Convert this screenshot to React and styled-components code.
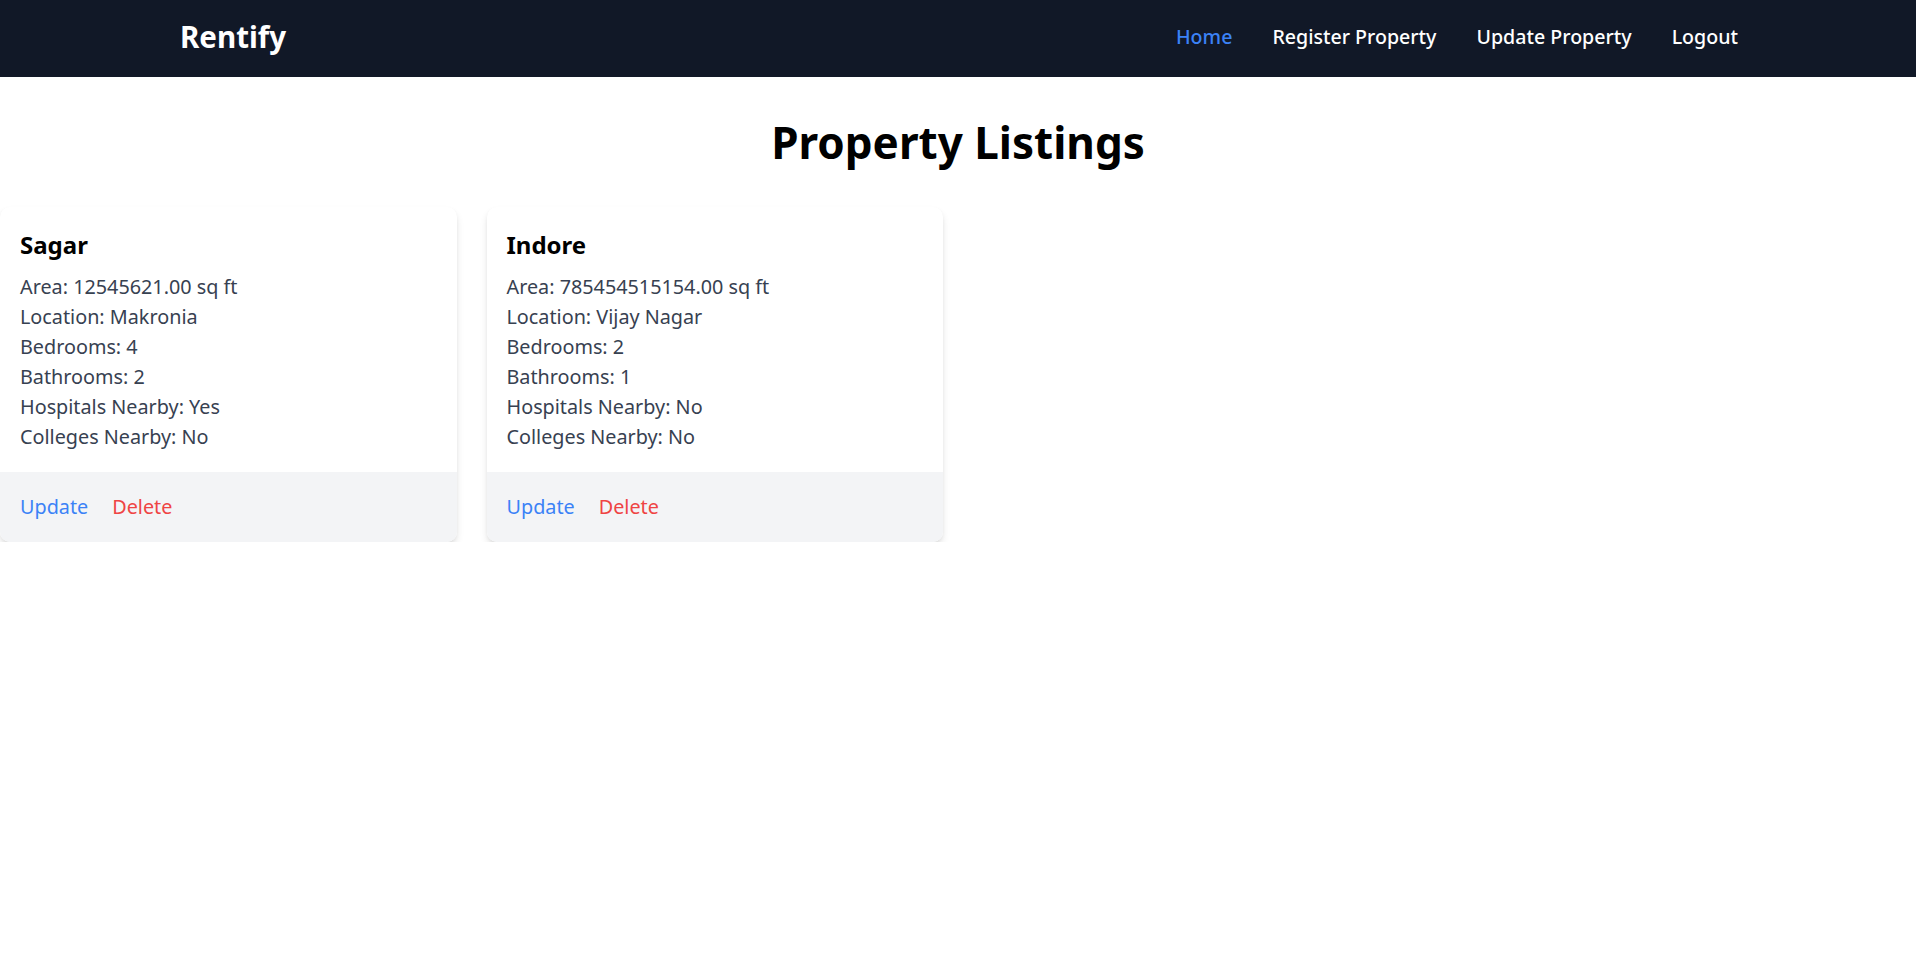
import React from 'react';
import styled, {createGlobalStyle} from 'styled-components';

const GlobalStyle = createGlobalStyle`
    * {
        box-sizing: border-box;
    }
    body {
        margin: 0;
        background: #ffffff;
        font-family: "Noto Sans", "Open Sans", sans-serif;
        color: #000000;
    }
`;

// 매물 목록 데이터
const properties = [
    {
        id: 1,
        title: 'Sagar',
        area: '12545621.00',
        location: 'Makronia',
        bedrooms: 4,
        bathrooms: 2,
        hospitals: true,
        colleges: false,
    },
    {
        id: 2,
        title: 'Indore',
        area: '785454515154.00',
        location: 'Vijay Nagar',
        bedrooms: 2,
        bathrooms: 1,
        hospitals: false,
        colleges: false,
    },
];

const navLinks = ['Home', 'Register Property', 'Update Property', 'Logout'];

function PropertyCard({property}) {
    return (
        <Card>
            <CardBody>
                <CardTitle>{property.title}</CardTitle>
                <Detail>Area: {property.area} sq ft</Detail>
                <Detail>Location: {property.location}</Detail>
                <Detail>Bedrooms: {property.bedrooms}</Detail>
                <Detail>Bathrooms: {property.bathrooms}</Detail>
                <Detail>Hospitals Nearby: {property.hospitals ? 'Yes' : 'No'}</Detail>
                <Detail>Colleges Nearby: {property.colleges ? 'Yes' : 'No'}</Detail>
            </CardBody>
            <CardFooter>
                <ActionLink $tone="blue">Update</ActionLink>
                <ActionLink $tone="red">Delete</ActionLink>
            </CardFooter>
        </Card>
    );
}

function App() {
    return (
        <>
            <GlobalStyle />
            <NavBar>
                <NavInner>
                    <Logo>Rentify</Logo>
                    <NavList>
                        {navLinks.map((link, i) => (
                            <NavItem key={link} $active={i === 0}>{link}</NavItem>
                        ))}
                    </NavList>
                </NavInner>
            </NavBar>
            <PageTitle>Property Listings</PageTitle>
            <CardGrid>
                {properties.map((p) => (
                    <PropertyCard key={p.id} property={p} />
                ))}
            </CardGrid>
        </>
    );
}

export default App;

const NavBar = styled.nav`
    background-color: #111827;
    height: 77px;
    padding-bottom: 4px;
    display: flex;
    align-items: center;
    `;

const NavInner = styled.div`
    width: 1600px;
    margin: 0 auto;
    padding: 0 20px;
    display: flex;
    justify-content: space-between;
    align-items: center;
    `;

const Logo = styled.div`
    color: #ffffff;
    font-size: 29.5px;
    font-weight: 700;
    line-height: 40px;
    margin-left: 2px;
    `;

const NavList = styled.div`
    display: flex;
    gap: 40px;
    `;

const NavItem = styled.a`
    color: ${(p) => (p.$active ? '#3b82f6' : '#ffffff')};
    font-size: 19.6px;
    font-weight: 500;
    line-height: 30px;
    cursor: pointer;
    `;

const PageTitle = styled.h1`
    margin: 40px 0;
    text-align: center;
    font-size: 44px;
    font-weight: 700;
    line-height: 50px;
    color: #000000;
    `;

const CardGrid = styled.div`
    display: grid;
    grid-template-columns: repeat(4, 1fr);
    gap: 30px;
    `;

const Card = styled.div`
    background-color: #ffffff;
    border-radius: 10px;
    overflow: hidden;
    box-shadow: 0 5px 8px -1px rgba(0, 0, 0, 0.12), 0 2px 5px -2px rgba(0, 0, 0, 0.1);
    `;

const CardBody = styled.div`
    padding: 20px;
    `;

const CardTitle = styled.h2`
    margin: 0 0 10px 0;
    font-size: 24px;
    font-weight: 700;
    line-height: 35px;
    color: #000000;
    `;

const Detail = styled.p`
    margin: 0;
    font-size: 19.8px;
    line-height: 30px;
    color: #374151;
    `;

const CardFooter = styled.div`
    background-color: #f3f4f6;
    padding: 20px;
    display: flex;
    gap: 24px;
    `;

const ActionLink = styled.a`
    font-size: 19.8px;
    line-height: 30px;
    color: ${(p) => (p.$tone === 'red' ? '#ef4444' : '#3b82f6')};
    cursor: pointer;
    `;
